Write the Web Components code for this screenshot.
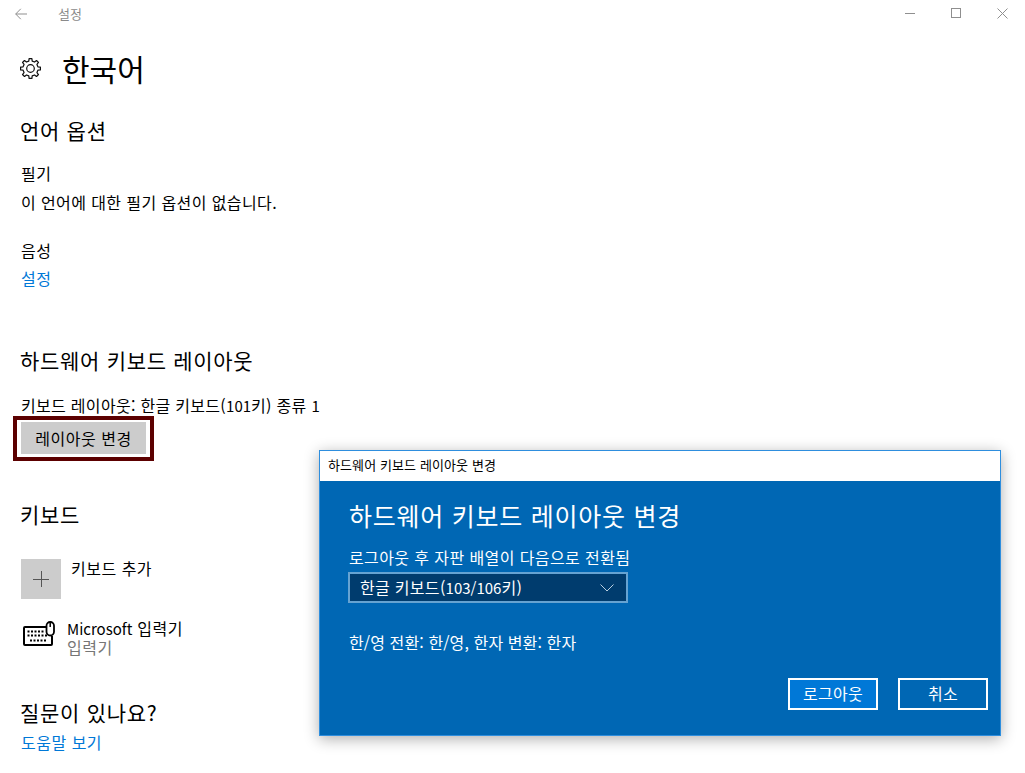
<!DOCTYPE html>
<html lang="ko"><head><meta charset="utf-8">
<style>
html,body{margin:0;padding:0;height:773px;overflow:hidden;background:#fff;font-family:"Noto Sans CJK KR","Noto Sans",sans-serif;}
</style></head><body>
<settings-app>
  <title-bar></title-bar>
  <page-head>한국어</page-head>
  <set-section heading="언어 옵션" style="--head-gap:19px">
    <opt-group label="필기"><span style="letter-spacing:.4px">이 언어에 대한 필기 옵션이 없습니다.</span></opt-group>
    <opt-group label="음성" style="margin-top:28px"><a-link>설정</a-link></opt-group>
  </set-section>
  <set-section heading="하드웨어 키보드 레이아웃" style="margin-top:58px;--head-gap:21px">
    <line-text>키보드 레이아웃: 한글 키보드(<la-t>101</la-t>키) 종류 <la-t>1</la-t></line-text>
    <focus-button>레이아웃 변경</focus-button>
  </set-section>
  <set-section heading="키보드" style="margin-top:39px;--head-gap:31px">
    <add-row>키보드 추가</add-row>
    <ime-row></ime-row>
  </set-section>
  <set-section heading="질문이 있나요?" style="margin-top:39px;--head-gap:7px">
    <a-link>도움말 보기</a-link>
  </set-section>
  <layout-dialog></layout-dialog>
</settings-app>
<script>
function def(name,css,html){
  customElements.define(name,class extends HTMLElement{
    constructor(){super();const r=this.attachShadow({mode:'open'});
      r.innerHTML='<style>'+css+'</style>'+html;}
    connectedCallback(){
      const r=this.shadowRoot;
      r.querySelectorAll('[data-attr]').forEach(e=>{e.textContent=this.getAttribute(e.dataset.attr)||''});
    }
  });
}
function gearPath(){
  const c=10.5,R=10,r=7.6,pts=[];
  for(let k=0;k<8;k++){
    const a=k*45-90;
    [[r,a-13],[R,a-8],[R,a+8],[r,a+13]].forEach(([q,d])=>{
      const t=d*Math.PI/180;
      pts.push((c+q*Math.cos(t)).toFixed(2)+' '+(c+q*Math.sin(t)).toFixed(2));
    });
  }
  return 'M'+pts.join('L')+'Z';
}
def('settings-app',':host{display:block;position:relative;width:1025px;height:773px;overflow:hidden;color:#000;font-size:16px;letter-spacing:.5px;line-height:20px}','<slot></slot>');
def('la-t',':host{font-size:15px;letter-spacing:0}','<slot></slot>');
def('title-bar',`:host{display:flex;align-items:center;height:27px;color:#8a8a8a;font-size:13px;letter-spacing:0}
 .back{display:flex;padding-left:15px;box-sizing:border-box;width:58px}
 .win{margin-left:auto;display:flex}
 .win span{width:46px;display:flex;justify-content:center}
 svg{display:block}`,
 `<div class="back"><svg width="12" height="12" viewBox="0 0 12 12" fill="none" stroke="#8f8f8f" stroke-width="1"><path d="M.7 6H12M5.800.8.700 6l5.100 5.200"/></svg></div><div>설정</div>
 <div class="win"><span><svg width="10" height="10" viewBox="0 0 10 10"><path d="M0 5.500h10" stroke="#8f8f8f"/></svg></span><span><svg width="10" height="10" viewBox="0 0 10 10" fill="none"><rect x=".5" y=".5" width="9" height="9" stroke="#8f8f8f"/></svg></span><span><svg width="11" height="11" viewBox="0 0 11 11" fill="none"><path d="M.5.500l10 10M10.500.500l-10 10" stroke="#8f8f8f"/></svg></span></div>`);
def('page-head',`:host{display:flex;align-items:center;height:46px;margin:18px 0 25px 20px;font-size:30px;line-height:46px;letter-spacing:0}
 svg{margin:0 21px 0 0;display:block}`,
 `<svg width="21" height="21" viewBox="0 0 21 21" fill="none" stroke="#111" stroke-width="1.2" stroke-linejoin="round"><path d="${gearPath()}"/><circle cx="10.500" cy="10.500" r="3.800"/></svg><slot></slot>`);
def('set-section',`:host{display:block;padding-left:20px}
 h2{margin:0 0 var(--head-gap,16px);font-weight:400;font-size:21px;letter-spacing:.7px;line-height:28px}
 .b{padding-left:1px}`,
 `<h2 data-attr="heading"></h2><div class="b"><slot></slot></div>`);
def('opt-group',`:host{display:block}.l{height:29px;line-height:20px}`,`<div class="l" data-attr="label"></div><slot></slot>`);
def('a-link',`:host{display:block;color:#0078d7;margin-top:-1px}`,`<slot></slot>`);
def('line-text',`:host{display:block;letter-spacing:.3px}`,`<slot></slot>`);
def('focus-button',`:host{display:block;width:141px;height:45px;box-sizing:border-box;border:4px solid #5c0000;padding:2px 4px 3px;margin:0 0 0 -8px;background:#fff}
 div{background:#ccc;height:100%;display:flex;align-items:center;justify-content:center}`,`<div><slot></slot></div>`);
def('add-row',`:host{display:flex;gap:10px}
 .i{width:40px;height:40px;background:#ccc;display:flex;align-items:center;justify-content:center}`,
 `<div class="i"><svg width="16" height="16" viewBox="0 0 16 16" shape-rendering="crispEdges"><path d="M8.500 0v16M0 8.500h16" stroke="#555" stroke-width="1"/></svg></div><div style="margin-top:-1px"><slot></slot></div>`);
def('ime-row',`:host{display:flex;gap:12px;margin-top:20px;height:40px;line-height:19px}
 .s{color:#767676}svg{margin:2px 0 0 2px;display:block;flex:none}.la{font-size:15px;letter-spacing:0}`,
 `<svg width="32" height="25" viewBox="0 0 32 25" fill="none" stroke="#000"><path d="M23 6H2a1 1 0 0 0-1 1V23a1 1 0 0 0 1 1h26a1 1 0 0 0 1-1V15" stroke-width="2"/><rect x="23.500" y="1" width="7.500" height="13.500" rx="3.700" stroke-width="1.800"/><path d="M27.200 1v5" stroke-width="1.500"/><path d="M4.500 10.500h16M4.500 14.500h20M7 19.500h16" stroke-width="2" stroke-dasharray="2 1.500" /></svg><div><div><span class="la">Microsoft</span> 입력기</div><div class="s">입력기</div></div>`);
def('layout-dialog',`:host{position:absolute;left:319px;top:450px;width:682px;height:286px;box-sizing:border-box;border:1px solid #2e8ede;background:#0067b4;color:#fff;box-shadow:0 3px 14px rgba(0,0,0,.32);display:flex;flex-direction:column;font-size:16px;letter-spacing:.3px}
 .t{background:#fff;color:#000;height:30px;line-height:28px;padding-left:8px;font-size:13px;letter-spacing:.1px;flex:none}
 .m{padding:16px 29px 0;flex:1;display:flex;flex-direction:column}
 h1{margin:0;font-weight:400;font-size:25px;letter-spacing:.75px;line-height:36px}
 .lb{margin-top:14px;line-height:20px;letter-spacing:.4px}
 .sel{margin:5px 0 0 -1px;width:280px;height:31px;box-sizing:border-box;border:2px solid #66a3d2;background:#003c6e;display:flex;align-items:center;padding:0 12px 0 10px;justify-content:space-between}
 .k{margin-top:29px;line-height:20px;letter-spacing:.1px}
 .bt{margin-top:auto;margin-bottom:25px;display:flex;justify-content:flex-end;gap:20px;margin-right:-17px}
 .bt span{width:90px;height:32px;box-sizing:border-box;border:2px solid #fff;display:flex;align-items:center;justify-content:center;padding-bottom:2px}
 .bt .p{background:#0078d7}
 .la{font-size:15px;letter-spacing:0}`,
 `<div class="t">하드웨어 키보드 레이아웃 변경</div><div class="m"><h1>하드웨어 키보드 레이아웃 변경</h1><div class="lb">로그아웃 후 자판 배열이 다음으로 전환됨</div><div class="sel"><span>한글 키보드(<span class="la">103/106</span>키)</span><svg width="14" height="8" viewBox="0 0 14 8" fill="none"><path d="M.5.500 7 7l6.500-6.500" stroke="#b9cfe0"/></svg></div><div class="k">한/영 전환: 한/영, 한자 변환: 한자</div><div class="bt"><span class="p">로그아웃</span><span>취소</span></div></div>`);
</script>
</body></html>
